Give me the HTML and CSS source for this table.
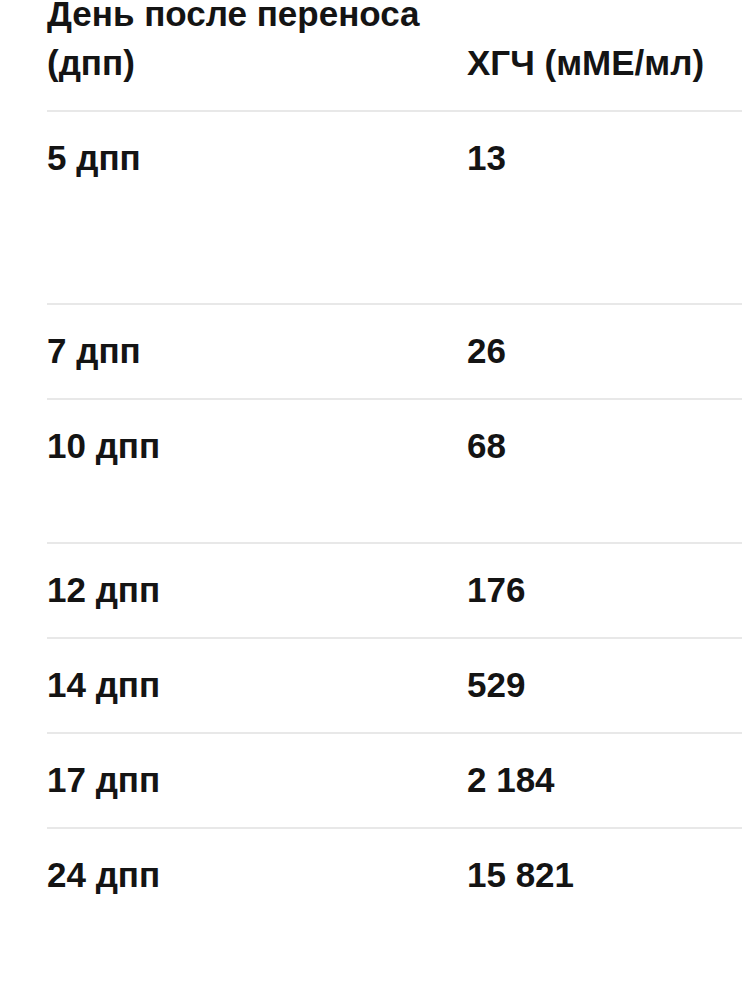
FILE: index.html
```html
<!DOCTYPE html>
<html lang="ru">
<head>
<meta charset="utf-8">
<link rel="stylesheet" href="styles.css">
</head>
<body>
<div class="table">
  <div class="row head">
    <div class="cell">День после переноса (дпп)</div>
    <div class="cell">ХГЧ (мМЕ/мл)</div>
  </div>
  <div class="row tall2">
    <div class="cell">5 дпп</div>
    <div class="cell">13</div>
  </div>
  <div class="row">
    <div class="cell">7 дпп</div>
    <div class="cell">26</div>
  </div>
  <div class="row tall1">
    <div class="cell">10 дпп</div>
    <div class="cell">68</div>
  </div>
  <div class="row">
    <div class="cell">12 дпп</div>
    <div class="cell">176</div>
  </div>
  <div class="row">
    <div class="cell">14 дпп</div>
    <div class="cell">529</div>
  </div>
  <div class="row">
    <div class="cell">17 дпп</div>
    <div class="cell">2 184</div>
  </div>
  <div class="row last">
    <div class="cell">24 дпп</div>
    <div class="cell">15 821</div>
  </div>
</div>
</body>
</html>
```
FILE: styles.css
```css
html, body {
  margin: 0;
  padding: 0;
  background: #ffffff;
}
body {
  width: 742px;
  height: 1000px;
  overflow: hidden;
}
.table {
  padding-left: 47px;
}
.row {
  display: grid;
  grid-template-columns: 420px 1fr;
  align-items: end;
  border-top: 2px solid #e8e8e8;
  padding: 26px 0 27px;
  font-family: "Liberation Sans", Arial, sans-serif;
  font-weight: 700;
  font-size: 35px;
  line-height: 40px;
  color: #141414;
}
.row.head {
  border-top: none;
  margin-top: -11px;
  padding: 0 0 23px;
  line-height: 49px;
}
.row.tall2 {
  padding-bottom: 125px;
}
.row.tall1 {
  padding-bottom: 76px;
}
.row.last {
  padding-bottom: 120px;
}
```
